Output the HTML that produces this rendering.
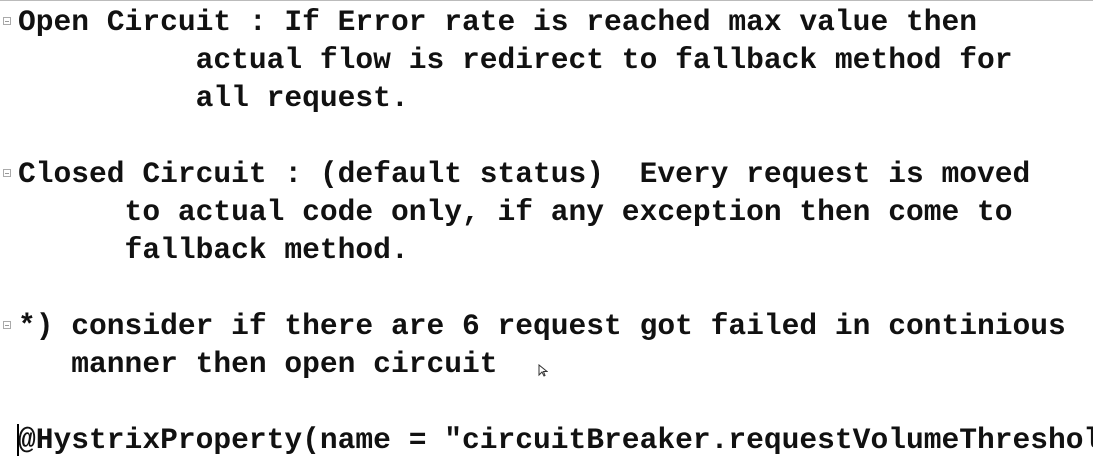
<!DOCTYPE html><html><head><style>
body{margin:0;width:1093px;height:473px;background:#fff;overflow:hidden;position:relative;border-top:1px solid #bbb;box-sizing:border-box}
pre{position:absolute;left:18px;top:2px;margin:0;font-family:"Liberation Mono",monospace;font-weight:bold;font-size:29.6px;line-height:38px;color:#111}
.m{position:absolute;left:3px;width:6px;height:6px;border:1px solid #aaa;font-size:0}
.m:after{content:"";position:absolute;left:1px;right:1px;top:3px;height:1px;background:#999}
.cur{position:absolute;left:17px;top:423px;width:2px;height:32px;background:#000}
</style></head><body>
<div class="m" style="top:16px"></div>
<div class="m" style="top:168px"></div>
<div class="m" style="top:320px"></div>
<pre>Open Circuit : If Error rate is reached max value then
          actual flow is redirect to fallback method for
          all request.

Closed Circuit : (default status)  Every request is moved
      to actual code only, if any exception then come to
      fallback method.

*) consider if there are 6 request got failed in continious
   manner then open circuit

@HystrixProperty(name = "circuitBreaker.requestVolumeThreshold"</pre>
<div class="cur"></div>
<svg style="position:absolute;left:538px;top:363px" width="10" height="14"><path d="M1 1 L1 11 L4 8 L6 12 L7 11.5 L5.5 7.5 L9 7.5 Z" fill="#fff" stroke="#333" stroke-width="1"/></svg>
</body></html>
